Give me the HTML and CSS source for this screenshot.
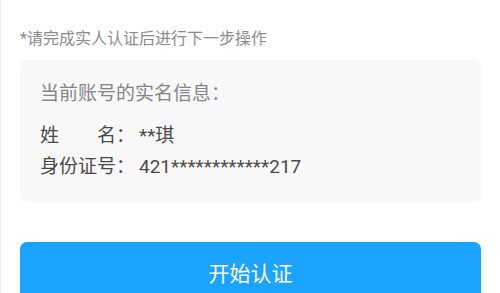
FILE: index.html
```html
<!DOCTYPE html>
<html lang="zh-CN">
<head>
<meta charset="utf-8">
<link rel="stylesheet" href="styles.css">
</head>
<body>
<div class="page">
  <p class="note">*请完成实人认证后进行下一步操作</p>
  <div class="card">
    <div class="card-title">当前账号的实名信息：</div>
    <div class="row"><span class="label">姓　　名：</span><span class="value">**琪</span></div>
    <div class="row"><span class="label">身份证号：</span><span class="value">421************217</span></div>
  </div>
  <button class="btn">开始认证</button>
</div>
</body>
</html>
```
FILE: styles.css
```css
html, body {
  margin: 0;
  padding: 0;
  background: #ffffff;
}
body {
  font-family: Roboto, "Noto Sans CJK SC", "Noto Sans", sans-serif;
  overflow: hidden;
}
.page {
  width: 500px;
  height: 293px;
  box-sizing: border-box;
  border-left: 1px solid #f0f0f0;
  padding: 26.5px 19px 0 19px;
  display: flex;
  flex-direction: column;
}
.note {
  margin: 0;
  font-size: 16px;
  line-height: 24px;
  color: #8c8c8c;
}
.card {
  margin-top: 9.5px;
  background: #f8f8f8;
  border-radius: 7px;
  padding: 18.5px 20px 20.5px 20px;
}
.card-title {
  font-size: 19px;
  line-height: 30px;
  color: #858585;
  margin-bottom: 11px;
}
.row {
  display: flex;
  font-size: 19px;
  line-height: 31px;
  color: #4a4a4a;
}
.label {
  width: 99px;
  flex: none;
}
.value {
  color: #4a4a4a;
}
.btn {
  margin-top: 40px;
  height: 60px;
  flex: none;
  border: none;
  border-radius: 7px;
  background: #1aa3ff;
  color: #ffffff;
  font-family: Roboto, "Noto Sans CJK SC", sans-serif;
  font-size: 21px;
  padding: 0;
  width: 100%;
}
```
